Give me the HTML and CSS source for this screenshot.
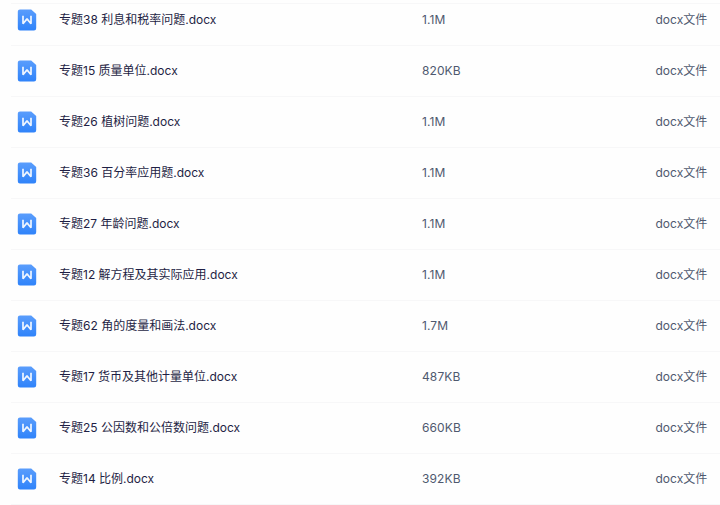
FILE: index.html
```html
<!doctype html>
<html lang="zh-CN">
<head>
  <meta charset="utf-8">
  <title>文件列表</title>
  <link rel="stylesheet" href="styles.css">
</head>
<body>
  <div class="file-panel">
    <div class="file-head"></div>
    <div class="file-scroll">
      <ul class="file-list" id="file-list"></ul>
    </div>
  </div>
  <template id="file-row">
    <li class="file-row">
      <svg class="file-icon" viewBox="0 0 20 22">
        <defs>
          <linearGradient id="doc-blue" x1="0" y1="0" x2="0" y2="1">
            <stop offset="0" stop-color="#5a9dfc" />
            <stop offset="1" stop-color="#2f83fa" />
          </linearGradient>
        </defs>
        <path fill="url(#doc-blue)" d="M3 .4h11.2l5 4.6v14.3a2.2 2.2 0 0 1-2.2 2.2H3a2.2 2.2 0 0 1-2.2-2.2V2.6A2.2 2.2 0 0 1 3 .4z" />
        <path fill="none" stroke="#fff" stroke-width="1.7" opacity=".92" stroke-linejoin="bevel" d="M6 6.7v8l4-4.8 4 4.8v-8" />
      </svg>
      <span class="file-name"></span>
      <span class="file-size"></span>
      <span class="file-type">docx文件</span>
    </li>
  </template>
  <script src="index.js"></script>
</body>
</html>
```
FILE: styles.css
```css
html, body {
  margin: 0;
  padding: 0;
  height: 100%;
  overflow: hidden;
  background: #fefefe;
}
body {
  font-family: Inter, "Noto Sans CJK SC", sans-serif;
  font-size: 12px;
  color: #4f596f;
}
.file-panel {
  display: flex;
  flex-flow: column nowrap;
  height: 100%;
  padding-left: 11px;
}
.file-head {
  flex: none;
  height: 3px;
  border-bottom: 1px solid #f7f7f8;
}
/* scrolled to the end of the list */
.file-scroll {
  flex: auto;
  min-height: 0;
  display: flex;
  flex-flow: column nowrap;
  justify-content: flex-end;
  overflow: hidden;
}
.file-list {
  flex: none;
  margin: 0;
  padding: 0;
  list-style-type: none;
}
.file-row {
  display: flex;
  align-items: center;
  height: 50px;
  padding-left: 6px;
  border-bottom: 1px solid #f7f7f8;
  line-height: 20px;
  white-space: nowrap;
}
.file-icon {
  flex: none;
  width: 20px;
  height: 22px;
  margin-right: 22px;
}
.file-name {
  flex: none;
  width: 363px;
  color: #1f1f45;
}
.file-size {
  flex: none;
  width: 233.5px;
  letter-spacing: 0.1px;
}
.file-type {
  flex: auto;
}
```
FILE: index.js
```js
var files = [
  ['专题38 利息和税率问题.docx', '1.1M'],
  ['专题15 质量单位.docx', '820KB'],
  ['专题26 植树问题.docx', '1.1M'],
  ['专题36 百分率应用题.docx', '1.1M'],
  ['专题27 年龄问题.docx', '1.1M'],
  ['专题12 解方程及其实际应用.docx', '1.1M'],
  ['专题62 角的度量和画法.docx', '1.7M'],
  ['专题17 货币及其他计量单位.docx', '487KB'],
  ['专题25 公因数和公倍数问题.docx', '660KB'],
  ['专题14 比例.docx', '392KB']
];

var list = document.getElementById('file-list');
var template = document.getElementById('file-row');

files.forEach(function (file) {
  var row = template.content.cloneNode(true);
  row.querySelector('.file-name').textContent = file[0];
  row.querySelector('.file-size').textContent = file[1];
  list.appendChild(row);
});
```
